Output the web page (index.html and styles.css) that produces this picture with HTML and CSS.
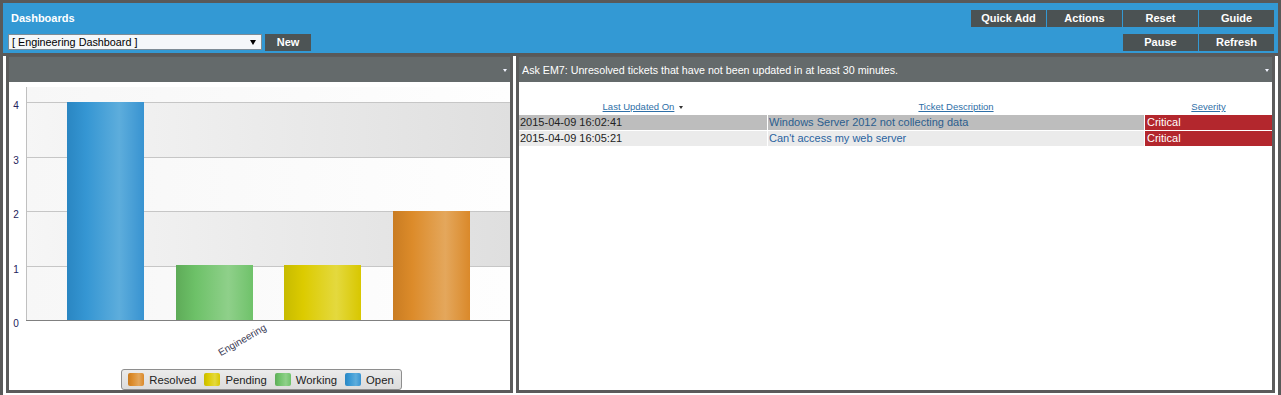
FILE: index.html
```html
<!DOCTYPE html>
<html>
<head>
<meta charset="utf-8">
<link rel="stylesheet" href="styles.css">
</head>
<body>
<div class="frame">
  <header class="topbar">
    <div class="tb-left">
      <div class="title">Dashboards</div>
      <div class="select-row">
        <div class="select"><span>[ Engineering Dashboard ]</span><i class="caret"></i></div>
        <button class="btn btn-new">New</button>
      </div>
    </div>
    <div class="tb-right">
      <div class="btn-row">
        <button class="btn">Quick Add</button>
        <button class="btn">Actions</button>
        <button class="btn">Reset</button>
        <button class="btn">Guide</button>
      </div>
      <div class="btn-row">
        <button class="btn">Pause</button>
        <button class="btn">Refresh</button>
      </div>
    </div>
  </header>
  <main class="content">
    <section class="panel panel-chart">
      <div class="panel-head"><span class="ptitle"></span><i class="harrow"></i></div>
      <div class="panel-body chart-body">
        <svg class="chart" width="501" height="286" viewBox="0 0 501 286">
          <defs>
            <linearGradient id="bandDark" x1="0" x2="1" y1="0" y2="0">
              <stop offset="0" stop-color="#f6f6f6"/>
              <stop offset="1" stop-color="#dfdfdf"/>
            </linearGradient>
            <linearGradient id="bandLight" x1="0" x2="1" y1="0" y2="0">
              <stop offset="0" stop-color="#f7f7f7"/>
              <stop offset="1" stop-color="#fefefe"/>
            </linearGradient>
            <linearGradient id="gBlue" x1="0" x2="1" y1="0" y2="0">
              <stop offset="0" stop-color="#2a86c2"/>
              <stop offset="0.25" stop-color="#3596d3"/>
              <stop offset="0.68" stop-color="#5daddc"/>
              <stop offset="1" stop-color="#3893d1"/>
            </linearGradient>
            <linearGradient id="gGreen" x1="0" x2="1" y1="0" y2="0">
              <stop offset="0" stop-color="#5eab58"/>
              <stop offset="0.25" stop-color="#6dc168"/>
              <stop offset="0.68" stop-color="#8fd08a"/>
              <stop offset="1" stop-color="#6fc26a"/>
            </linearGradient>
            <linearGradient id="gYellow" x1="0" x2="1" y1="0" y2="0">
              <stop offset="0" stop-color="#c7bb00"/>
              <stop offset="0.25" stop-color="#dccb00"/>
              <stop offset="0.68" stop-color="#e4d93e"/>
              <stop offset="1" stop-color="#d8c700"/>
            </linearGradient>
            <linearGradient id="gOrange" x1="0" x2="1" y1="0" y2="0">
              <stop offset="0" stop-color="#c97c22"/>
              <stop offset="0.25" stop-color="#dc8b2a"/>
              <stop offset="0.68" stop-color="#e4a75c"/>
              <stop offset="1" stop-color="#da892a"/>
            </linearGradient>
          </defs>
          <rect x="17" y="5" width="484" height="15.5" fill="url(#bandLight)"/>
          <rect x="17" y="20.5" width="484" height="55" fill="url(#bandDark)"/>
          <rect x="17" y="75.5" width="484" height="54" fill="url(#bandLight)"/>
          <rect x="17" y="129.5" width="484" height="55" fill="url(#bandDark)"/>
          <rect x="17" y="184.5" width="484" height="54" fill="url(#bandLight)"/>
          <g stroke="#c6c6c6" stroke-width="1">
            <line x1="17" x2="501" y1="20.5" y2="20.5"/>
            <line x1="17" x2="501" y1="75.5" y2="75.5"/>
            <line x1="17" x2="501" y1="129.5" y2="129.5"/>
            <line x1="17" x2="501" y1="184.5" y2="184.5"/>
          </g>
          <line x1="17.5" x2="17.5" y1="5" y2="238" stroke="#c0c0c0"/>
          <rect x="58" y="20" width="77" height="218" fill="url(#gBlue)"/>
          <rect x="167" y="183" width="77" height="55" fill="url(#gGreen)"/>
          <rect x="275" y="183" width="77" height="55" fill="url(#gYellow)"/>
          <rect x="384" y="129" width="77" height="109" fill="url(#gOrange)"/>
          <line x1="17" x2="501" y1="238.5" y2="238.5" stroke="#808080"/>
          <g class="ylab" text-anchor="middle">
            <text x="7" y="27">4</text>
            <text x="7" y="82">3</text>
            <text x="7" y="136">2</text>
            <text x="7" y="191">1</text>
            <text x="7" y="245">0</text>
          </g>
          <text class="xlab" x="258" y="247.5" text-anchor="end" transform="rotate(-30 258 247.5)">Engineering</text>
        </svg>
        <div class="legend">
          <span class="li"><i class="sw sw-orange"></i>Resolved</span>
          <span class="li"><i class="sw sw-yellow"></i>Pending</span>
          <span class="li"><i class="sw sw-green"></i>Working</span>
          <span class="li"><i class="sw sw-blue"></i>Open</span>
        </div>
      </div>
    </section>
    <section class="panel panel-table">
      <div class="panel-head"><span class="ptitle">Ask EM7: Unresolved tickets that have not been updated in at least 30 minutes.</span><i class="harrow"></i></div>
      <div class="panel-body">
        <table class="tickets">
          <thead>
            <tr>
              <th class="c1"><a>Last Updated On</a><i class="sort"></i></th>
              <th class="c2"><a>Ticket Description</a></th>
              <th class="c3"><a>Severity</a></th>
            </tr>
          </thead>
          <tbody>
            <tr class="r1">
              <td>2015-04-09 16:02:41</td>
              <td class="desc">Windows Server 2012 not collecting data</td>
              <td class="crit">Critical</td>
            </tr>
            <tr class="r2">
              <td>2015-04-09 16:05:21</td>
              <td class="desc">Can't access my web server</td>
              <td class="crit">Critical</td>
            </tr>
          </tbody>
        </table>
      </div>
    </section>
  </main>
</div>
</body>
</html>
```

FILE: styles.css
```css
html, body {
  margin: 0;
  padding: 0;
}
body {
  width: 1281px;
  height: 395px;
  overflow: hidden;
  background: #fff;
  font-family: "Liberation Sans", Arial, sans-serif;
}
.frame {
  box-sizing: border-box;
  width: 1281px;
  height: 395px;
  border: 3px solid #595959;
  border-bottom: none;
  display: flex;
  flex-direction: column;
}
.topbar {
  box-sizing: border-box;
  height: 53px;
  flex: none;
  background: #3399d4;
  border-bottom: 3px solid #595959;
  padding: 7px 4px 0 5px;
  display: flex;
  justify-content: space-between;
}
.tb-left, .tb-right {
  display: flex;
  flex-direction: column;
  gap: 7px;
}
.tb-right {
  align-items: flex-end;
}
.title {
  height: 17px;
  line-height: 16px;
  padding-left: 3px;
  color: #fff;
  font-weight: bold;
  font-size: 11px;
}
.select-row {
  display: flex;
  gap: 3px;
  align-items: flex-start;
}
.select {
  box-sizing: border-box;
  width: 254px;
  height: 16px;
  border: 1px solid #7d8c96;
  background: #f4f7f9;
  font-size: 10.8px;
  color: #000;
  padding: 0 5px 0 3px;
  display: flex;
  align-items: center;
  justify-content: space-between;
}
.caret {
  width: 0;
  height: 0;
  border-left: 3px solid transparent;
  border-right: 3px solid transparent;
  border-top: 5px solid #000;
}
.btn {
  box-sizing: border-box;
  width: 75px;
  height: 17px;
  border: 0;
  padding: 0;
  margin: 0;
  background: #4b5253;
  color: #fff;
  font-family: "Liberation Sans", Arial, sans-serif;
  font-weight: bold;
  font-size: 11px;
  line-height: 17px;
}
.btn-new {
  width: 46px;
  background: #4d5455;
}
.btn-row {
  display: flex;
  gap: 1px;
}
.content {
  flex: 1;
  display: flex;
  gap: 3px;
  padding: 0 3px 2px 3px;
  min-height: 0;
}
.panel {
  box-sizing: border-box;
  height: 337px;
  border: 3px solid #5b5b5b;
  border-top-width: 1px;
  display: flex;
  flex-direction: column;
}
.panel-chart {
  width: 507px;
  flex: none;
}
.panel-table {
  flex: 1;
}
.panel-head {
  height: 25px;
  flex: none;
  background: #646a6b;
  color: #fff;
  font-size: 10.7px;
  display: flex;
  align-items: center;
  justify-content: space-between;
  padding: 0 3px 0 3px;
}
.harrow {
  width: 0;
  height: 0;
  border-left: 2.5px solid transparent;
  border-right: 2.5px solid transparent;
  border-top: 3px solid #f2f4ff;
  margin-top: 2px;
}
.panel-body {
  flex: 1;
  background: #fff;
  min-height: 0;
}
.chart-body {
  display: flex;
  flex-direction: column;
  align-items: center;
}
.chart {
  display: block;
  flex: none;
}
.ylab text {
  font-family: "Liberation Sans", Arial, sans-serif;
  font-size: 10px;
  fill: #23235c;
}
.xlab {
  font-family: "Liberation Sans", Arial, sans-serif;
  font-size: 10px;
  fill: #3a3a55;
}
.legend {
  box-sizing: border-box;
  height: 22px;
  margin-left: 4px;
  margin-top: 1px;
  padding: 0 7px 0 6px;
  border: 1px solid #8e8e8e;
  border-radius: 3px;
  background: linear-gradient(#ebebeb, #dcdcdc);
  display: flex;
  align-items: center;
  gap: 8px;
  font-size: 11.3px;
  color: #222;
}
.li {
  display: flex;
  align-items: center;
  gap: 5px;
}
.sw {
  width: 16px;
  height: 13px;
  border-radius: 2px;
}
.sw-orange { background: linear-gradient(90deg, #c97c22, #dc8b2a 25%, #e4a75c 68%, #da892a); }
.sw-yellow { background: linear-gradient(90deg, #c7bb00, #dccb00 25%, #e4d93e 68%, #d8c700); }
.sw-green { background: linear-gradient(90deg, #5eab58, #6dc168 25%, #8fd08a 68%, #6fc26a); }
.sw-blue { background: linear-gradient(90deg, #2a86c2, #3596d3 25%, #5daddc 68%, #3893d1); }

.tickets {
  table-layout: fixed;
  width: calc(100% + 2px);
  margin: 16px -1px 0 -1px;
  border-collapse: separate;
  border-spacing: 1px;
  font-size: 11px;
}
.tickets th {
  padding: 0;
  height: 15px;
  font-weight: normal;
  font-size: 9.5px;
  text-align: center;
  vertical-align: middle;
}
.tickets th a {
  color: #2f6fa7;
  text-decoration: underline;
}
.tickets .c1 { width: 248px; }
.tickets .c3 { width: 127px; }
.sort {
  display: inline-block;
  width: 0;
  height: 0;
  margin-left: 5px;
  border-left: 2px solid transparent;
  border-right: 2px solid transparent;
  border-top: 3px solid #333;
  vertical-align: middle;
}
.tickets td {
  height: 15px;
  padding: 0 0 0 1px;
  line-height: 15px;
  color: #222;
  white-space: nowrap;
  overflow: hidden;
}
.tickets td.desc {
  color: #2a63a0;
}
.r1 td { background: #bdbdbd; }
.r1 td.desc { color: #2b5d8e; }
.r2 td { background: #ebebeb; }
.tickets td.crit {
  background: #b3272d;
  color: #fff;
  padding-left: 2px;
}
```
